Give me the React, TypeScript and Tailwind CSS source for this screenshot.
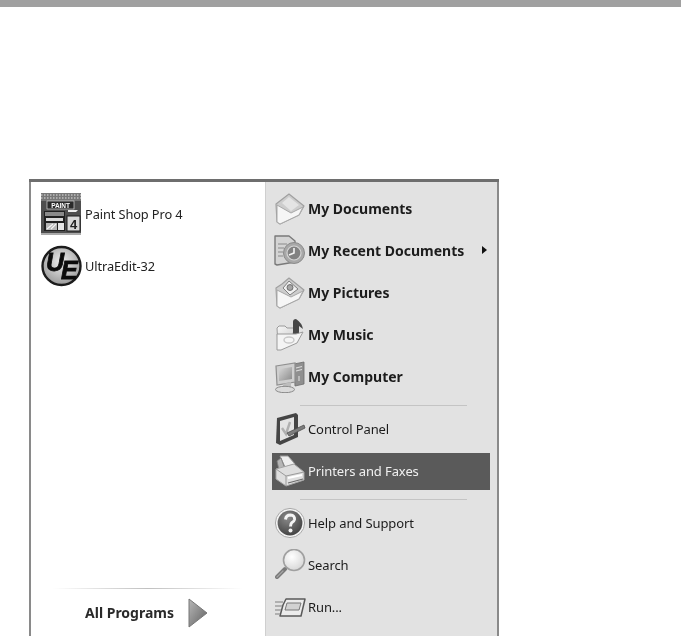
import type { ReactNode } from "react";

// shared icon wrapper, all the start menu icons are soft grayscale 32x32 drawings
function Ic({ children }: { children: ReactNode }) {
  return (
    <svg width="32" height="32" viewBox="0 0 32 32" className="shrink-0 blur-[0.6px]">
      <defs>
        <linearGradient id="fold" x1="0" y1="0" x2="1" y2="1">
          <stop offset="0" stopColor="#f7f7f7" />
          <stop offset="1" stopColor="#c4c4c4" />
        </linearGradient>
        <linearGradient id="screen" x1="0" y1="0" x2="1" y2="1">
          <stop offset="0" stopColor="#d8d8d8" />
          <stop offset="1" stopColor="#8a8a8a" />
        </linearGradient>
        <radialGradient id="ball" cx="0.4" cy="0.3" r="0.8">
          <stop offset="0" stopColor="#8a8a8a" />
          <stop offset="1" stopColor="#3c3c3c" />
        </radialGradient>
        <radialGradient id="lens" cx="0.4" cy="0.35" r="0.8">
          <stop offset="0" stopColor="#ffffff" />
          <stop offset="1" stopColor="#cfcfcf" />
        </radialGradient>
      </defs>
      {children}
    </svg>
  );
}

const DocsIcon = () => (
  <Ic>
    <path d="M2 11 L15 1 L30 13 L25 22 L6 31 L3 29 Z" fill="#cdcdcd" stroke="#a0a0a0" strokeWidth="1.2" strokeLinejoin="round" />
    <path d="M8 10 L15 4 L25 12 L17 18 Z" fill="#e4e4e4" />
    <path d="M3 12 L17 20 L29 14 L25 22 L6 31 L3 29 Z" fill="#f6f6f6" stroke="#a8a8a8" strokeWidth="1" strokeLinejoin="round" />
  </Ic>
);

const RecentIcon = () => (
  <Ic>
    <path d="M1 1 H15 L21 6 V27 L3 30 L1 29 Z" fill="#d4d4d4" stroke="#7a7a7a" strokeWidth="1.4" strokeLinejoin="round" />
    <path d="M4 9 H13 M4 13 H10 M4 17 H9 M4 21 H9" stroke="#a2a2a2" strokeWidth="1.3" />
    <circle cx="20" cy="18" r="10.5" fill="#a8a8a8" stroke="#8a8a8a" strokeWidth="1" />
    <circle cx="20" cy="18" r="7" fill="#828282" stroke="#d4d4d4" strokeWidth="1.2" />
    <path d="M20 13 V18 L15 20" fill="none" stroke="#f4f4f4" strokeWidth="1.6" />
  </Ic>
);

const PicturesIcon = () => (
  <Ic>
    <path d="M2 11 L8 7 L15 1 L30 13 L25 22 L6 31 L3 29 Z" fill="#cdcdcd" stroke="#a0a0a0" strokeWidth="1.2" strokeLinejoin="round" />
    <path d="M9 11 L15 4 L24 12 L16 18 Z" fill="#f0f0f0" stroke="#808080" strokeWidth="1" />
    <circle cx="16" cy="10.5" r="3" fill="#a5a5a5" stroke="#5a5a5a" strokeWidth="0.8" />
    <path d="M3 13 L17 20 L29 14 L25 22 L6 31 L3 29 Z" fill="#f6f6f6" stroke="#a8a8a8" strokeWidth="1" strokeLinejoin="round" />
  </Ic>
);

const MusicIcon = () => (
  <Ic>
    <path d="M3 9 L5 7 H11 L13 9 H24 V18 L8 28 H4 Z" fill="url(#fold)" stroke="#9a9a9a" strokeWidth="1" />
    <path d="M19 13 V3 Q19 0 22 0 Q28 4 29 10 L25 7 V14 Q24 17 20 16 Q18 15 19 13 Z" fill="#474747" />
    <path d="M3 15 H22 L29 13 L23 24 L7 31 H3 Z" fill="#f4f4f4" stroke="#9a9a9a" strokeWidth="1" strokeLinejoin="round" />
    <ellipse cx="15" cy="21" rx="5" ry="3" fill="none" stroke="#c8c8c8" strokeWidth="1.4" />
  </Ic>
);

const ComputerIcon = () => (
  <Ic>
    <path d="M20 3 L30 1 V23 L21 25 Z" fill="#8f8f8f" stroke="#6c6c6c" strokeWidth="0.8" />
    <path d="M22 7 L28 5.5 M22 10 L28 8.5 M25 15 V20" stroke="#dcdcdc" strokeWidth="1.1" />
    <path d="M2 5 L21 2 V21 L3 24 Z" fill="#cfcfcf" stroke="#8f8f8f" strokeWidth="1.2" />
    <path d="M5 8 L18 6 V18 L5 20 Z" fill="url(#screen)" />
    <path d="M9 23 L17 21 V26 L9 27 Z" fill="#bdbdbd" />
    <ellipse cx="11" cy="28.5" rx="9.5" ry="3.2" fill="#dadada" stroke="#8a8a8a" strokeWidth="1" />
  </Ic>
);

const ControlIcon = () => (
  <Ic>
    <path d="M3 5 L22 0 L24 2 V24 L6 32 L2 30 Z" fill="#454545" />
    <path d="M6 8 L20 4 V22 L6 28 Z" fill="#e4e4e4" />
    <path d="M8 15 L12 21 L16 9" fill="none" stroke="#b0b0b0" strokeWidth="2.4" />
    <path d="M13 20 L30 12 L31 15 L15 23 Z" fill="#7d7d7d" stroke="#505050" strokeWidth="0.8" />
  </Ic>
);

const PrinterIcon = () => (
  <Ic>
    <path d="M6 1 L14 1 L21 9 L11 12 Z" fill="#efefef" stroke="#9a9a9a" strokeWidth="1" />
    <path d="M3 6 L7 3 L11 14 L5 15 Z" fill="#b6b6b6" stroke="#808080" strokeWidth="0.8" />
    <path d="M2 14 L20 9 L30 17 V25 L12 31 L2 24 Z" fill="#dedede" stroke="#a4a4a4" strokeWidth="1" />
    <path d="M2 14 L12 21 L30 17 M12 21 V31" fill="none" stroke="#9a9a9a" strokeWidth="1" />
    <path d="M14 23 L28 20" stroke="#ffffff" strokeWidth="2" />
    <path d="M14 28 L29 24" stroke="#6a6a6a" strokeWidth="1.2" />
  </Ic>
);

const HelpIcon = () => (
  <Ic>
    <circle cx="16" cy="16" r="14.6" fill="#f3f3f3" stroke="#a8a8a8" strokeWidth="1" />
    <circle cx="16" cy="16" r="12.4" fill="url(#ball)" />
    <path d="M11.5 12.5 Q12 8 16.5 8 Q21 8.5 20.5 12.5 Q20 14.5 18 15.5 Q16.5 16.5 16.5 19.5" fill="none" stroke="#f4f4f4" strokeWidth="3" />
    <circle cx="16.5" cy="23.5" r="2" fill="#f4f4f4" />
  </Ic>
);

const SearchIcon = () => (
  <Ic>
    <path d="M11 20 L3 28" stroke="#7a7a7a" strokeWidth="4" strokeLinecap="round" />
    <path d="M9 22 L3 28" stroke="#a5a5a5" strokeWidth="1.2" strokeLinecap="round" />
    <circle cx="20" cy="11" r="10.5" fill="url(#lens)" stroke="#a0a0a0" strokeWidth="1.6" />
  </Ic>
);

const RunIcon = () => (
  <Ic>
    <path d="M9 14 L12 8 H31 L27 25 H6 Z" fill="#ececec" stroke="#5a5a5a" strokeWidth="1.5" strokeLinejoin="round" />
    <path d="M13 12 H27 L25 19 H11 Z" fill="#d2d2d2" stroke="#787878" strokeWidth="1" />
    <path d="M1 11 H9 M1 15 H8 M1 19 H7 M1 23 H6" stroke="#a0a0a0" strokeWidth="1.5" />
  </Ic>
);

const PaintIcon = () => (
  <svg width="42" height="42" viewBox="0 0 42 42" className="shrink-0 blur-[0.5px]">
    <rect x="0" y="0" width="40" height="40" fill="#4e4e4e" />
    <path d="M0 0 H40 V8 H0 Z" fill="#777" />
    <path d="M0 2 H40 M0 5 H40" stroke="#e2e2e2" strokeWidth="1.2" strokeDasharray="1.5 1.5" />
    <rect x="6" y="8" width="27" height="8" fill="#2a2a2a" stroke="#eee" strokeWidth="0.6" />
    <text x="19.5" y="14.5" textAnchor="middle" fontSize="6.5" fontWeight="700" fill="#fff" fontFamily="Liberation Sans, sans-serif">PAINT</text>
    <path d="M27 17 H37 L35 19 H27 Z" fill="#eee" />
    <rect x="3" y="18" width="21" height="20" fill="#202020" />
    <rect x="4" y="19" width="19" height="4" fill="#8a8a8a" />
    <rect x="5" y="25" width="17" height="3" fill="#dadada" />
    <rect x="5" y="30" width="11" height="7" fill="#b5b5b5" />
    <path d="M6 36 L12 31 M10 36 L15 31" stroke="#f4f4f4" strokeWidth="1.2" />
    <rect x="17" y="30" width="6" height="7" fill="#e5e5e5" />
    <rect x="26" y="23" width="13" height="15" fill="#d8d8d8" stroke="#1c1c1c" strokeWidth="1" />
    <text x="32.5" y="36" textAnchor="middle" fontSize="13" fontWeight="700" fill="#222" fontFamily="Liberation Sans, sans-serif">4</text>
    <rect x="0" y="40" width="40" height="2" fill="#aaa" />
  </svg>
);

const UltraIcon = () => (
  <svg width="42" height="42" viewBox="0 0 42 42" className="shrink-0 blur-[0.5px]">
    <defs>
      <radialGradient id="ue" cx="0.5" cy="0.4" r="0.7">
        <stop offset="0" stopColor="#f0f0f0" />
        <stop offset="1" stopColor="#8c8c8c" />
      </radialGradient>
    </defs>
    <circle cx="20.5" cy="21" r="19" fill="url(#ue)" stroke="#1c1c1c" strokeWidth="2.4" />
    <text fontSize="25" fontWeight="700" fontStyle="italic" fill="#0c0c0c" stroke="#0c0c0c" strokeWidth="0.8" fontFamily="Liberation Sans, sans-serif">
      <tspan x="5" y="26">U</tspan>
      <tspan x="20" y="34">E</tspan>
    </text>
  </svg>
);

function Row({ icon, label, bold, active, arrow }: { icon: ReactNode; label: string; bold?: boolean; active?: boolean; arrow?: boolean }) {
  return (
    <div className={`h-[42px] flex items-center pl-[6px] ${active ? "text-[#f0f0f0]" : "text-[#1c1c1c]"}`}>
      <div className={`flex items-center h-[37px] w-[218px] ${active ? "bg-[#5a5a5a]" : ""}`}>
        <div className="w-[33px] ml-[1px] flex justify-center">{icon}</div>
        <span className={`ml-[2px] whitespace-nowrap ${bold ? "font-bold text-[14px] tracking-normal pb-[2px]" : "pt-[1px]"}`}>
          {label}
        </span>
        {arrow && <span className="ml-[18px] mb-[2px] w-0 h-0 border-y-[4px] border-y-transparent border-l-[5px] border-l-[#111]" />}
      </div>
    </div>
  );
}

function Divider() {
  return (
    <div className="h-[10px] flex items-center pl-[34px] pt-[4px]">
      <div className="w-[167px] h-[1px] bg-[#c4c4c4]" />
    </div>
  );
}

export default function App() {
  return (
    <div className="w-[681px] h-[636px] bg-white overflow-hidden text-[13px] tracking-[-0.1px] font-['Noto_Sans'] blur-[0.3px]">
      <div className="h-[7px] bg-[#a0a0a0]" />

      {/* start menu */}
      <div className="mt-[172px] ml-[29px] w-[470px] h-[457px] flex flex-col border-t-[3px] border-t-[#6e6e6e]">
        <div className="flex-1 flex min-h-0">
          {/* left column */}
          <div className="w-[236px] flex flex-col bg-white border-l-[2px] border-l-[#8a8a8a]">
            <div className="flex-1 pt-[11px] pl-[10px] flex flex-col gap-[10px]">
              <div className="flex items-center h-[42px] gap-[2px]">
                <PaintIcon />
                <span className="text-[12.8px] text-[#222] pt-[2px]">Paint Shop Pro 4</span>
              </div>
              <div className="flex items-center h-[42px] gap-[2px]">
                <UltraIcon />
                <span className="text-[12.8px] text-[#222] pt-[2px]">UltraEdit-32</span>
              </div>
            </div>
            <div className="h-[1px] mx-[22px] -mt-[1px] bg-gradient-to-r from-white via-[#c0c0c0] to-white" />
            <div className="h-[47px] flex items-center justify-end pr-[57px] gap-[14px]">
              <span className="font-bold text-[14px] tracking-normal text-[#2a2a2a]">All Programs</span>
              <svg width="20" height="30" viewBox="0 0 20 30" className="blur-[0.5px]">
                <defs>
                  <linearGradient id="go" x1="0" y1="0" x2="1" y2="1">
                    <stop offset="0" stopColor="#b8b8b8" />
                    <stop offset="1" stopColor="#5f5f5f" />
                  </linearGradient>
                </defs>
                <path d="M1 1 L19 15 L1 29 Z" fill="url(#go)" stroke="#777" strokeWidth="1" strokeLinejoin="round" />
              </svg>
            </div>
          </div>

          {/* right column */}
          <div className="flex-1 bg-[#e2e2e2] border-l border-l-[#cfcfcf] border-r-[2px] border-r-[#8a8a8a] pt-[6px]">
            <Row icon={<DocsIcon />} label="My Documents" bold />
            <Row icon={<RecentIcon />} label="My Recent Documents" bold arrow />
            <Row icon={<PicturesIcon />} label="My Pictures" bold />
            <Row icon={<MusicIcon />} label="My Music" bold />
            <Row icon={<ComputerIcon />} label="My Computer" bold />
            <Divider />
            <Row icon={<ControlIcon />} label="Control Panel" />
            <Row icon={<PrinterIcon />} label="Printers and Faxes" active />
            <Divider />
            <Row icon={<HelpIcon />} label="Help and Support" />
            <Row icon={<SearchIcon />} label="Search" />
            <Row icon={<RunIcon />} label="Run..." />
          </div>
        </div>
      </div>
    </div>
  );
}
